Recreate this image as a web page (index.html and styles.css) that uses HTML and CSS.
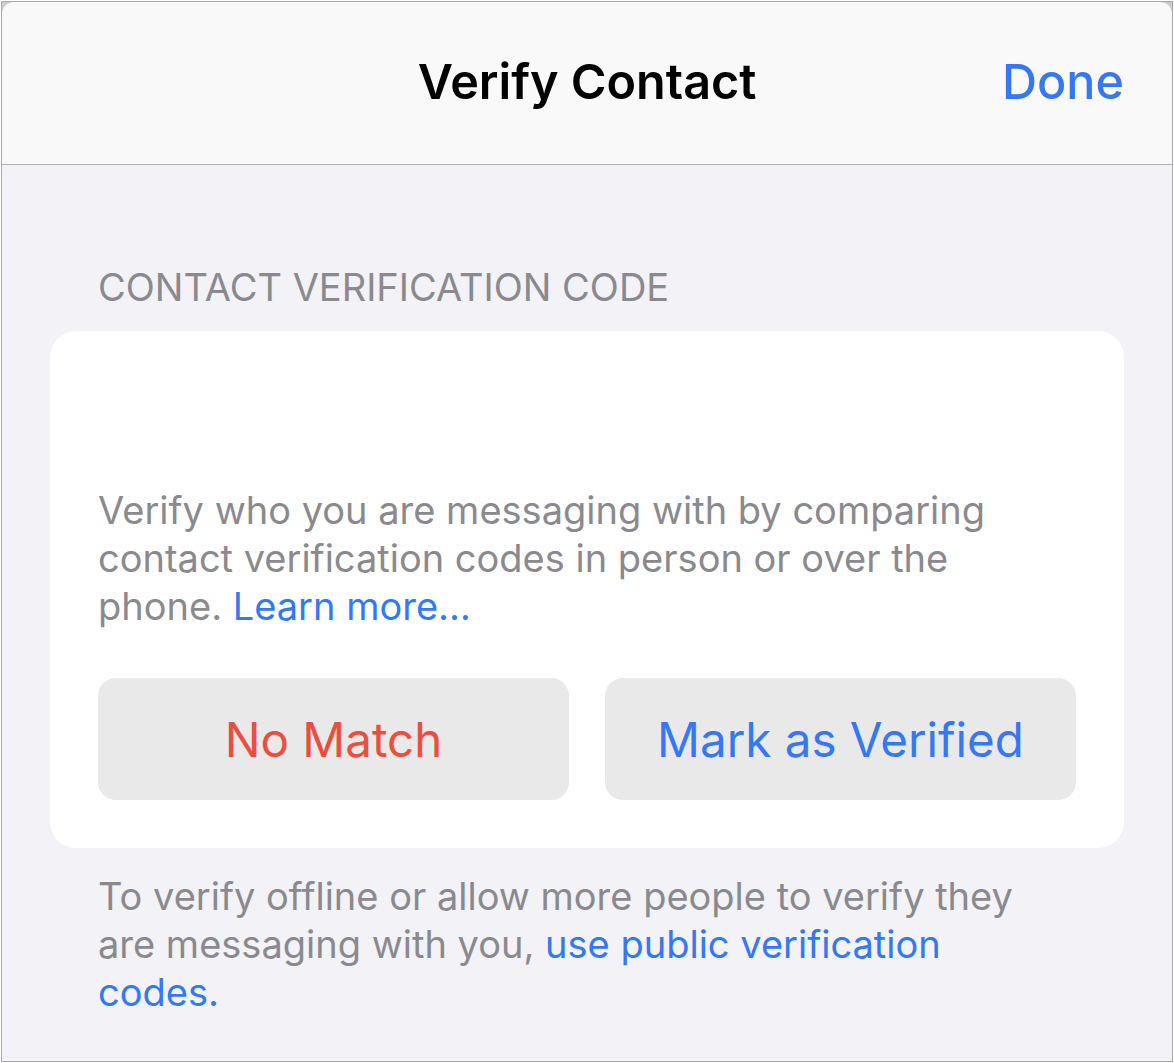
FILE: index.html
```html
<!DOCTYPE html>
<html>
<head>
<meta charset="utf-8">
<link rel="stylesheet" href="styles.css">
</head>
<body>
	<div class="sheet">
		<header class="nav">
			<span></span>
			<h1 class="nav-title">Verify Contact</h1>
			<a class="nav-done">Done</a>
		</header>
		<main class="content">
			<h2 class="section-title">CONTACT VERIFICATION CODE</h2>
			<section class="card">
				<div class="code-area"></div>
				<p class="card-text">Verify who you are messaging with by comparing contact verification codes in person or over the phone. <a class="link">Learn more…</a></p>
				<div class="actions">
					<button class="btn btn-danger">No Match</button>
					<button class="btn btn-primary">Mark as Verified</button>
				</div>
			</section>
			<p class="footnote">To verify offline or allow more people to verify they are messaging with you, <a class="link">use public verification codes.</a></p>
		</main>
	</div>
</body>
</html>
```

FILE: styles.css
```css
*{
	box-sizing: border-box;
}
html, body{
	margin: 0;
	height: 100%;
	overflow: hidden;
}
body{
	font-family: Inter, "Noto Sans", sans-serif;
	background: #fff;
}
.sheet{
	margin: 1px;
	height: 1061px;
	border: 1px solid #a9a9ab;
	background: #cdcdcf;
	display: flex;
	flex-direction: column;
}
/* top bar */
.nav{
	height: 163px;
	padding: 0 48px 4px;
	background: #f9f9f9;
	border-radius: 12px 12px 0 0;
	border-bottom: 1px solid #b1b1b3;
	display: grid;
	grid-template-columns: 1fr auto 1fr;
	align-items: center;
}
.nav-title{
	margin: 0;
	font-size: 48.5px;
	font-weight: 600;
	color: #000;
}
.nav-done{
	justify-self: end;
	font-size: 48.5px;
	font-weight: 500;
	color: #3478f6;
}
/* grouped list */
.content{
	flex: 1;
	background: #f2f2f7;
	padding: 99px 48px 0;
}
.section-title{
	margin: 0 48px 21px;
	font-size: 38px;
	font-weight: 400;
	line-height: 46px;
	color: #8a8a8e;
}
.card{
	background: #fff;
	border-radius: 26px;
	padding: 48px;
}
.code-area{
	height: 107px;
}
.card-text, .footnote{
	margin: 0;
	font-size: 38px;
	line-height: 48px;
	color: #8a8a8e;
}
.link{
	color: #3478f6;
}
.actions{
	margin-top: 48px;
	display: grid;
	grid-template-columns: 1fr 1fr;
	gap: 36px;
}
.btn{
	height: 122px;
	border: 0;
	border-radius: 18px;
	background: #e9e9ea;
	font-family: inherit;
	font-size: 47.5px;
	font-weight: 400;
}
.btn-danger{
	color: #eb4e3d;
}
.btn-primary{
	color: #3478f6;
}
.footnote{
	margin: 24px 96px 0 48px;
}
```
